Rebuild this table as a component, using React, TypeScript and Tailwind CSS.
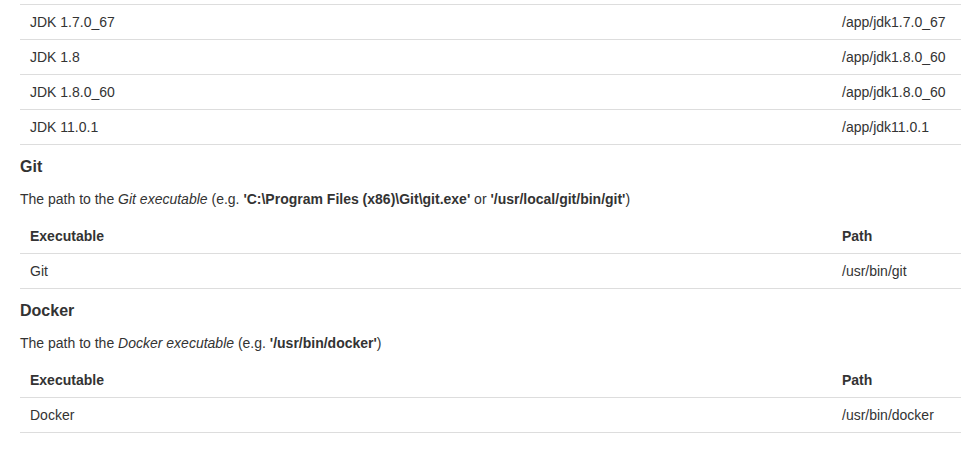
import React from 'react';

type Row = { name: string; path: string };

const jdks: Row[] = [
    { name: 'JDK 1.7.0_67', path: '/app/jdk1.7.0_67' },
    { name: 'JDK 1.8', path: '/app/jdk1.8.0_60' },
    { name: 'JDK 1.8.0_60', path: '/app/jdk1.8.0_60' },
    { name: 'JDK 11.0.1', path: '/app/jdk11.0.1' },
];

function ToolTable({ rows, header }: { rows: Row[]; header?: boolean }) {
    return (
        <table className="w-full table-fixed border-collapse">
            <colgroup>
                <col className="w-[812px]" />
                <col />
            </colgroup>
            {header && (
                <thead>
                    <tr className="border-b border-[#dddddd]">
                        <th className="text-left font-bold px-[10px] py-[8px] leading-[18px]">Executable</th>
                        <th className="text-left font-bold px-[10px] py-[8px] leading-[18px]">Path</th>
                    </tr>
                </thead>
            )}
            <tbody>
                {rows.map((r, i) => (
                    <tr key={i} className="border-b border-[#dddddd]">
                        <td className="px-[10px] py-[8px] leading-[18px]">{r.name}</td>
                        <td className="px-[10px] py-[8px] leading-[18px]">{r.path}</td>
                    </tr>
                ))}
            </tbody>
        </table>
    );
}

export default function App() {
    return (
        <div className="bg-white min-h-[449px] pl-[20px] pt-[4px] text-[14px] text-[#333333] font-['Liberation_Sans',Arial,sans-serif]">
            {/* JDK table (header scrolled out of view) */}
            <div className="border-t border-[#dddddd]">
                <ToolTable rows={jdks} />
            </div>

            {/* Git */}
            <h4 className="mt-[12px] text-[16px] font-bold leading-[20px]">Git</h4>
            <p className="mt-[12px] leading-[20px]">
                The path to the <em>Git executable</em> (e.g. <strong>'C:\Program Files (x86)\Git\git.exe'</strong> or <strong>'/usr/local/git/bin/git'</strong>)
            </p>
            <div className="mt-[10px]">
                <ToolTable header rows={[{ name: 'Git', path: '/usr/bin/git' }]} />
            </div>

            {/* Docker */}
            <h4 className="mt-[12px] text-[16px] font-bold leading-[20px]">Docker</h4>
            <p className="mt-[12px] leading-[20px]">
                The path to the <em>Docker executable</em> (e.g. <strong>'/usr/bin/docker'</strong>)
            </p>
            <div className="mt-[10px]">
                <ToolTable header rows={[{ name: 'Docker', path: '/usr/bin/docker' }]} />
            </div>
        </div>
    );
}
